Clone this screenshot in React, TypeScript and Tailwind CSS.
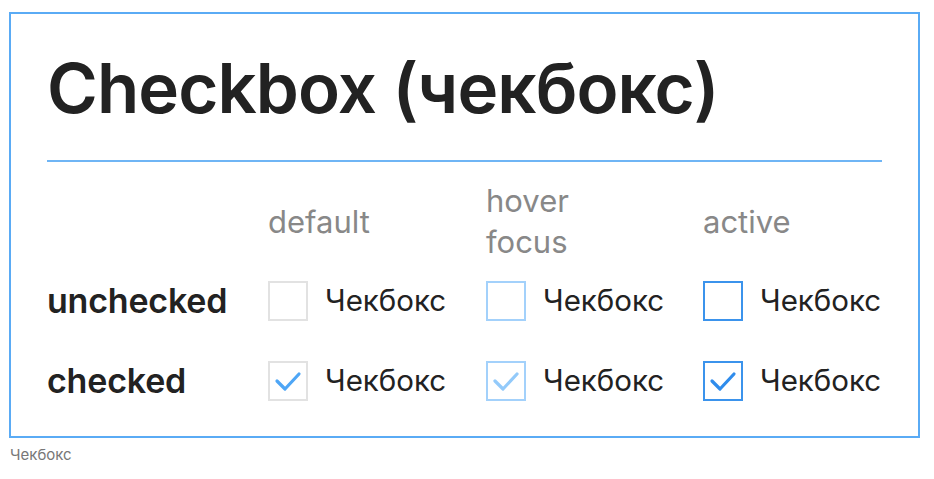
import React from "react";

const states = [
  { key: "default", border: "border-[#e2e2e2]", check: "#4ea6f6", w: "w-[218px]" },
  { key: "hover", border: "border-[#a3d1fb]", check: "#93cafa", w: "w-[217px]" },
  { key: "active", border: "border-[#3b93ec]", check: "#2f8cec", w: "w-[180px]" },
];

const Box = ({ border, check, checked }: { border: string; check: string; checked: boolean }) => (
  <div className={`w-10 h-10 border-2 ${border} bg-white flex items-center justify-center shrink-0`}>
    {checked && (
      <svg width="36" height="36" viewBox="2 2 36 36" fill="none">
        <path d="M9 20 L17 28 L31 13" stroke={check} strokeWidth="3.2" strokeLinecap="round" strokeLinejoin="round" />
      </svg>
    )}
  </div>
);

const Row = ({ label, checked }: { label: string; checked: boolean }) => (
  <div className="flex items-center h-20">
    <div className="w-[221px] shrink-0 text-[34px] font-semibold text-[#222] leading-none tracking-[-0.2px]">{label}</div>
    {states.map((s) => (
      <div key={s.key} className={`${s.w} shrink-0 flex items-center gap-[17px]`}>
        <Box border={s.border} check={s.check} checked={checked} />
        <span className="text-[29.5px] text-[#222] leading-none whitespace-nowrap">Чекбокс</span>
      </div>
    ))}
  </div>
);

export default function App() {
  return (
    <div className="bg-white pt-3 pl-[9px] font-['Inter',sans-serif]">
      <div className="w-[911px] h-[426px] border-2 border-[#5aabf5] px-9 pt-[38px]">
        <h1 className="text-[69px] leading-[72px] font-semibold text-[#222] tracking-[-0.9px]">Checkbox (чекбокс)</h1>
        <div className="h-[2px] bg-[#6fb5f5] mt-[36px]" />
        <div className="flex items-center h-20 mt-[19px] text-[31px] text-[#888] leading-[41px]">
          <div className="w-[221px] shrink-0" />
          <div className="w-[218px] shrink-0">default</div>
          <div className="w-[217px] shrink-0">
            <div>hover</div>
            <div>focus</div>
          </div>
          <div className="w-[180px] shrink-0">active</div>
        </div>
        <Row label="unchecked" checked={false} />
        <Row label="checked" checked={true} />
      </div>
      <div className="mt-[7px] ml-px text-[15px] leading-5 text-[#777]">Чекбокс</div>
    </div>
  );
}
